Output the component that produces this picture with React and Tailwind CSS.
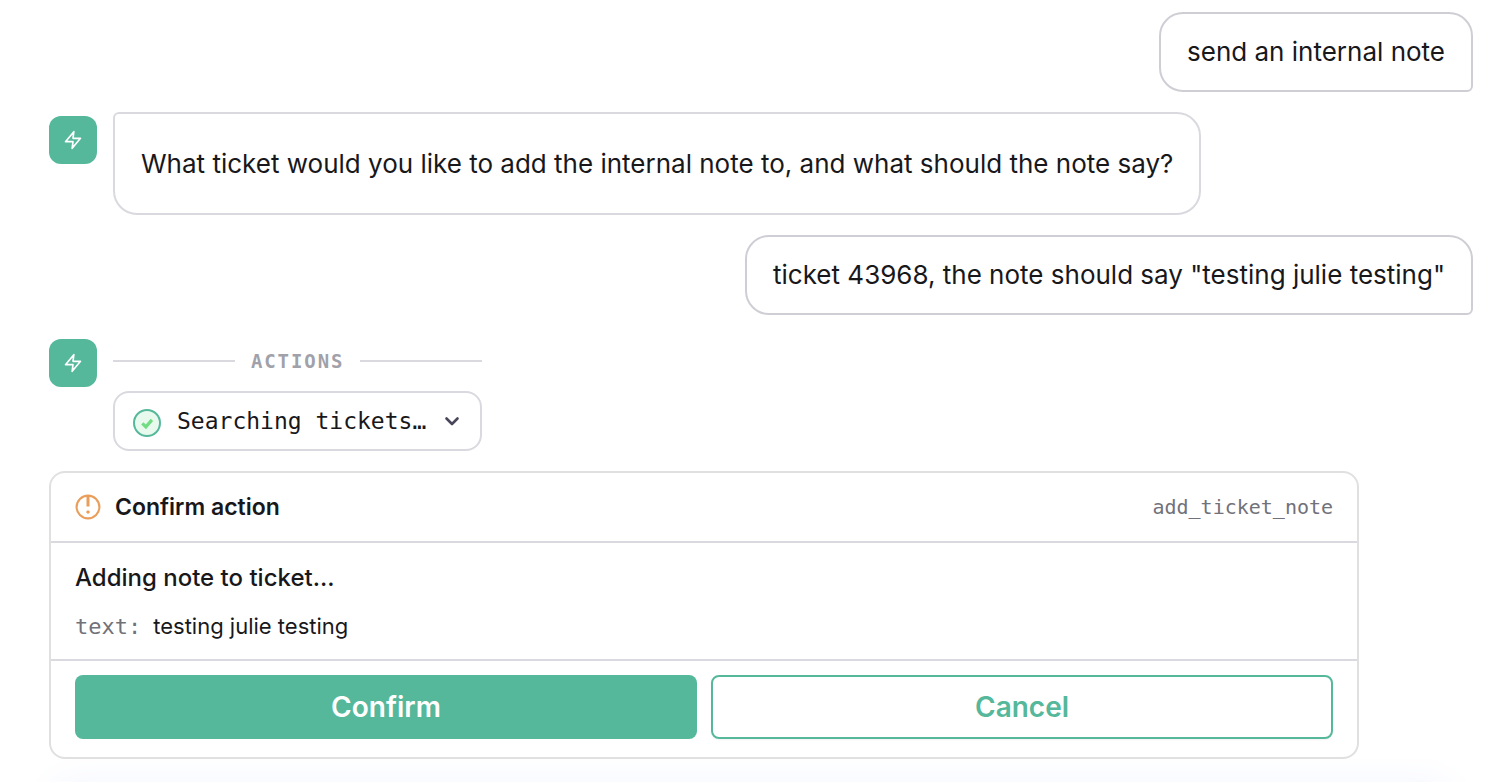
const bubble = 'border-2 px-[26px] text-[26px] text-[#18181b]'

function UserMessage({ children }) {
  return (
    <div className={`${bubble} self-end rounded-3xl rounded-br-md border-[#cfced5] py-5 leading-9`}>
      {children}
    </div>
  )
}

function Avatar() {
  return (
    <div className="mt-1 flex h-12 w-12 shrink-0 items-center justify-center rounded-xl bg-[#55b89b] text-white">
      <svg
        width="20"
        height="20"
        viewBox="0 0 24 24"
        fill="none"
        stroke="currentColor"
        strokeWidth="2"
        strokeLinecap="round"
        strokeLinejoin="round"
        aria-hidden="true"
      >
        <polygon points="13 2 3 14 12 14 11 22 21 10 12 10 13 2" />
      </svg>
    </div>
  )
}

function AssistantMessage({ children }) {
  return (
    <div className="flex items-start gap-4">
      <Avatar />
      <div className={`${bubble} rounded-3xl rounded-tl-md border-[#dad9df] py-8 leading-[35px]`}>
        {children}
      </div>
    </div>
  )
}

function CheckBadge() {
  return (
    <svg width="28" height="28" viewBox="0 0 28 28" fill="none" aria-hidden="true" className="mt-1">
      <circle cx="14" cy="14" r="13" fill="#e8faee" stroke="#55b89b" strokeWidth="2" />
      <path d="M9.3 14.3l3.6 3.6 6-7" stroke="#72dc82" strokeWidth="3.2" />
    </svg>
  )
}

function ChevronIcon() {
  return (
    <svg width="20" height="20" viewBox="0 0 20 20" fill="none" aria-hidden="true">
      <path
        d="M4.5 7.5L10 13l5.5-5.5"
        stroke="#49465c"
        strokeWidth="2.6"
        strokeLinecap="round"
        strokeLinejoin="round"
      />
    </svg>
  )
}

function AlertIcon() {
  return (
    <svg width="26" height="26" viewBox="0 0 26 26" fill="none" stroke="#e99f5b" aria-hidden="true">
      <circle cx="13" cy="13" r="11.4" strokeWidth="2.1" />
      <path d="M13 2v10.5" strokeWidth="3" />
      <path d="M13 15.9l2.1 2.1-2.1 2.1-2.1-2.1z" fill="#e99f5b" stroke="none" />
    </svg>
  )
}

function ToolActions() {
  return (
    <div className="flex items-start gap-4">
      <Avatar />
      <div className="flex flex-col gap-4">
        <div className="flex h-10 items-center gap-4 pt-3">
          <span className="h-0.5 flex-1 bg-[#dad9df]" />
          <span className="font-['DejaVu_Sans_Mono',monospace] text-[19px] font-bold tracking-widest text-[#a1a1aa]">
            ACTIONS
          </span>
          <span className="h-0.5 flex-1 bg-[#dad9df]" />
        </div>
        <button
          type="button"
          className="flex h-[60px] items-center gap-4 rounded-2xl border-2 border-[#dad9df] px-[18px] text-[#18181b]"
        >
          <CheckBadge />
          <span className="font-['DejaVu_Sans_Mono',monospace] text-[23px] leading-8">Searching tickets…</span>
          <ChevronIcon />
        </button>
      </div>
    </div>
  )
}

function ConfirmCard() {
  return (
    <section className="w-[92%] rounded-2xl border-2 border-[#e0e0e0] text-[#18181b]">
      <header className="flex items-center justify-between border-b-2 border-[#dad9df] px-6 py-[18px]">
        <div className="flex items-center gap-[14px]">
          <AlertIcon />
          <h2 className="text-[23px] leading-8 font-semibold">Confirm action</h2>
        </div>
        <code className="font-['DejaVu_Sans_Mono',monospace] text-xl leading-6 text-[#71717a]">
          add_ticket_note
        </code>
      </header>

      <div className="flex flex-col gap-4 border-b-2 border-[#dad9df] px-6 pt-[19px] pb-4">
        <p className="text-2xl leading-8 font-medium">Adding note to ticket...</p>
        <dl className="flex items-baseline gap-3 text-[22px] leading-8">
          <dt className="font-['DejaVu_Sans_Mono',monospace] text-[#71717a]">text:</dt>
          <dd>testing julie testing</dd>
        </dl>
      </div>

      <div className="grid grid-cols-2 gap-[14px] px-6 pt-[14px] pb-[18px] text-[28px] font-semibold">
        <button type="button" className="h-16 rounded-lg bg-[#55b89b] text-white">
          Confirm
        </button>
        <button type="button" className="h-16 rounded-lg border-2 border-[#55b89b] text-[#55b89b] shadow-xs">
          Cancel
        </button>
      </div>
    </section>
  )
}

export default function App() {
  return (
    <main className="bg-white font-['Inter',sans-serif]">
      <div className="flex flex-col gap-5 pt-3 pr-[29px] pl-[49px]">
        <UserMessage>send an internal note</UserMessage>
        <AssistantMessage>
          What ticket would you like to add the internal note to, and what should the note say?
        </AssistantMessage>
        <UserMessage>ticket 43968, the note should say "testing julie testing"</UserMessage>
        <ToolActions />
        <ConfirmCard />
      </div>
      {/* glow of the composer that sits under the thread */}
      <div className="h-[23px] overflow-hidden px-12 pt-[23px]">
        <div className="h-16 rounded-3xl shadow-[0_0_40px_#f4f6ff]" />
      </div>
    </main>
  )
}
